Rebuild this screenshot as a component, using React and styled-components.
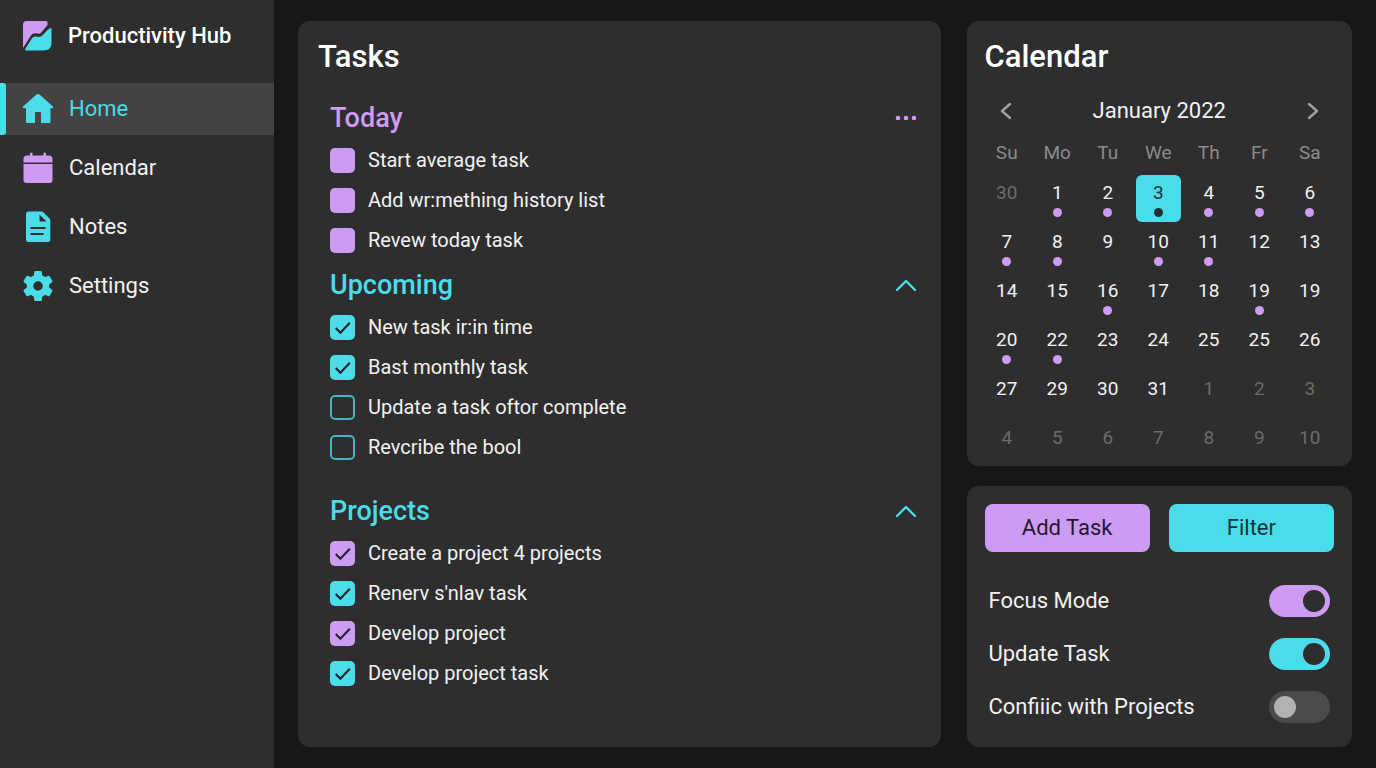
import React, { useState } from "react";
import styled, { createGlobalStyle } from "styled-components";

const color = {
  page: "#171717",
  panel: "#2e2e2e",
  active: "#434343",
  cyan: "#4adce9",
  purple: "#ce9bf2",
  text: "#f2f2f2",
  muted: "#8b8b8b",
  faint: "#6b6b6b",
};

const GlobalStyle = createGlobalStyle`
  * { box-sizing: border-box; }
  body {
    margin: 0;
    background: ${color.page};
    color: ${color.text};
    font-family: Roboto, "Liberation Sans", sans-serif;
  }
  button { font: inherit; color: inherit; border: 0; padding: 0; background: none; cursor: pointer; }
  h1, h2, h3, p, ul { margin: 0; padding: 0; }
  ul { list-style: none; }
`;

const Page = styled.div`
  display: grid;
  grid-template-columns: 274px minmax(0, 1fr);
  min-height: 100vh;
`;

const Sidebar = styled.aside`
  background: ${color.panel};
`;

const Brand = styled.div`
  display: flex;
  align-items: center;
  gap: 16px;
  height: 71px;
  padding-left: 22px;
  margin-bottom: 12px;
`;

const BrandName = styled.h1`
  font-size: 22px;
  font-weight: 500;
  line-height: 28px;
  color: #fff;
`;

const Nav = styled.nav`
  display: flex;
  flex-direction: column;
  gap: 7px;
`;

const NavLink = styled.a`
  display: flex;
  align-items: center;
  gap: 15px;
  height: 52px;
  padding-left: ${(p) => (p.$active ? 0 : 22)}px;
  font-size: 22px;
  line-height: 28px;
  text-decoration: none;
  color: ${(p) => (p.$active ? color.cyan : color.text)};
  background: ${(p) => (p.$active ? color.active : "transparent")};

  &::before {
    content: "";
    display: ${(p) => (p.$active ? "block" : "none")};
    width: 6px;
    height: 52px;
    margin-right: 1px;
    border-radius: 0 3px 3px 0;
    background: ${color.cyan};
  }
`;

const Main = styled.main`
  display: grid;
  grid-template-columns: minmax(0, 5fr) minmax(0, 3fr);
  gap: 26px;
  padding: 21px 24px;
`;

const SideColumn = styled.div`
  display: flex;
  flex-direction: column;
  gap: 20px;
`;

const Card = styled.section`
  background: ${color.panel};
  border-radius: 12px;
`;

const TasksCard = styled(Card)`
  padding: 16px 20px;
`;

const CalendarCard = styled(Card)`
  padding: 16px 17px 10px 15px;
`;

const ControlsCard = styled(Card)`
  flex: 1;
  padding: 18px 18px 13px;
`;

const CardTitle = styled.h2`
  font-size: 31px;
  font-weight: 500;
  line-height: 40px;
  color: #fff;
`;

const CalendarTitle = styled(CardTitle)`
  padding-left: 3px;
`;

const TaskSections = styled.div`
  margin-top: 19px;
  padding-left: 12px;
`;

const TaskSection = styled.section`
  padding-bottom: ${(p) => (p.$spaced ? 22 : 3)}px;
`;

const SectionHead = styled.div`
  display: flex;
  align-items: center;
  justify-content: space-between;
  height: 44px;
`;

const SectionTitle = styled.h3`
  font-size: 27px;
  font-weight: 500;
  line-height: 32px;
  color: ${(p) => color[p.$tone]};
`;

const HeadButton = styled.button`
  display: flex;
  align-items: center;
  justify-content: center;
  width: 30px;
  height: 30px;
  color: ${(p) => color[p.$tone]};
`;

const TaskRow = styled.label`
  display: flex;
  align-items: center;
  gap: 13px;
  height: 40px;
  font-size: 20px;
  line-height: 24px;
  cursor: pointer;
`;

const CHECK =
  "url(\"data:image/svg+xml,%3Csvg xmlns='http://www.w3.org/2000/svg' viewBox='0 0 24 24' fill='none' stroke='%23252030' stroke-width='2'%3E%3Cpath d='M5.500 12.500l4.500 4.500 9-9.500'/%3E%3C/svg%3E\")";

const TaskBox = styled.input`
  appearance: none;
  flex: none;
  width: 25px;
  height: 25px;
  margin: 0;
  border-radius: 5px;
  border: ${(p) => (p.$filled || p.checked ? "0" : "2px solid #43b6c0")};
  background: ${(p) => (p.$filled || p.checked ? color[p.$tone] : "transparent")};
  ${(p) => p.checked && `background-image: ${CHECK};`}
  cursor: pointer;
`;

const MonthBar = styled.div`
  display: flex;
  align-items: center;
  justify-content: space-between;
  height: 36px;
  margin-top: 16px;
  padding: 0 6px 0 8px;
`;

const MonthName = styled.p`
  font-size: 22px;
  line-height: 28px;
`;

const MonthButton = styled.button`
  display: flex;
  align-items: center;
  justify-content: center;
  width: 32px;
  height: 32px;
  color: #a0a0a0;
`;

const MonthTable = styled.table`
  width: 100%;
  margin-top: 9px;
  border-collapse: collapse;
  table-layout: fixed;
`;

const WeekdayCell = styled.th`
  height: 37px;
  padding: 0 0 7px;
  font-size: 19px;
  font-weight: 400;
  line-height: 24px;
  color: ${color.muted};
`;

const Week = styled.tr`
  height: 49px;
  &:last-child { height: 36px; }
`;

const DayCell = styled.td`
  padding: 0;
  vertical-align: top;
`;

const Day = styled.button`
  display: flex;
  flex-direction: column;
  align-items: center;
  gap: 3px;
  width: 45px;
  height: ${(p) => (p.$selected ? "47px" : "auto")};
  margin: 0 auto;
  padding-top: 6px;
  border-radius: 6px;
  font-size: 19px;
  line-height: 24px;
  color: ${(p) => (p.$selected ? "#14343a" : p.$outside ? color.faint : color.text)};
  background: ${(p) => (p.$selected ? color.cyan : "transparent")};
`;

const Dot = styled.span`
  width: 9px;
  height: 9px;
  border-radius: 50%;
  background: ${(p) => (p.$selected ? "#1d3136" : color.purple)};
`;

const ButtonRow = styled.div`
  display: grid;
  grid-template-columns: 1fr 1fr;
  gap: 19px;
  margin-bottom: 22px;
`;

const ActionButton = styled.button`
  height: 48px;
  border-radius: 8px;
  font-size: 22px;
  line-height: 28px;
  color: ${(p) => (p.$tone === "purple" ? "#271832" : "#15353a")};
  background: ${(p) => color[p.$tone]};
`;

const SwitchRow = styled.label`
  display: flex;
  align-items: center;
  justify-content: space-between;
  height: 53px;
  padding: 0 4px;
  font-size: 22px;
  line-height: 28px;
  cursor: pointer;
`;

const Switch = styled.input`
  appearance: none;
  display: flex;
  align-items: center;
  justify-content: ${(p) => (p.checked ? "flex-end" : "flex-start")};
  width: 61px;
  height: 32px;
  margin: 0;
  padding: 0 5px;
  border-radius: 16px;
  background: ${(p) => (p.checked ? color[p.$tone] : "#4a4a4a")};
  cursor: pointer;

  &::before {
    content: "";
    width: 22px;
    height: 22px;
    border-radius: 50%;
    background: ${(p) => (p.checked ? color.panel : "#b2b2b2")};
  }
`;

const LogoIcon = () => (
  <svg width="30" height="30" viewBox="0 0 30 30" aria-hidden="true">
    <path d="M1 4Q1 0 4.500 0H24Q25.500 0 25.500 1.500V4L19 11.800Q17.500 13.500 14.500 12.300Q11 11.500 9 14.500L1 27Z" fill={color.purple} />
    <path d="M29.500 7V22Q29.500 29.500 21.500 29.500H4Q2.500 29.500 3.500 27.500L10 17.300Q11.500 15 14 15.500Q18 16.800 20.300 14.500L25.500 9Q27.500 7 29.500 7Z" fill={color.cyan} />
  </svg>
);

const HomeIcon = () => (
  <svg width="32" height="32" viewBox="0 0 32 32" fill={color.cyan} aria-hidden="true">
    <path d="M14.500 1.500Q16 0.300 17.500 1.500L31 13.500Q31.800 15.200 30 15.200H28.500V28.500Q28.500 30 27 30H19V20Q19 19 18 19H14Q13 19 13 20V30H5.500Q4 30 4 28.500V15.200H2Q0.200 15.200 1 13.500Z" />
  </svg>
);

const CalendarIcon = () => (
  <svg width="32" height="32" viewBox="0 0 32 32" fill={color.purple} aria-hidden="true">
    <path d="M8 1Q9.500 0 10.500 1V3.500H21.500V1Q23 0 24 1V3.500H27Q30.500 3.500 30.500 7V10.500H1.500V7Q1.500 3.500 5 3.500H8Z" />
    <path d="M1.500 12H30.500V28Q30.500 31 27.500 31H4.500Q1.500 31 1.500 28Z" />
  </svg>
);

const NotesIcon = () => (
  <svg width="32" height="32" viewBox="0 0 32 32" aria-hidden="true">
    <path d="M6.500 0.500H19.500Q20.500 0.500 21.300 1.300L27.500 7.500Q28.300 8.300 28.300 9.500V28.500Q28.300 31 25.800 31H6.500Q4 31 4 28.500V3Q4 0.500 6.500 0.500Z" fill={color.cyan} />
    <path d="M17.500 3.500L24.500 10.500H19Q17.500 10.500 17.500 9Z" fill={color.panel} />
    <path d="M9.300 17H22.700M9.300 23H20.800" stroke={color.panel} strokeWidth="2.200" strokeLinecap="round" />
  </svg>
);

const SettingsIcon = () => (
  <svg width="32" height="32" viewBox="0 0 32 32" fill={color.cyan} stroke={color.cyan} strokeLinejoin="round" aria-hidden="true">
    {[0, 60, 120, 180, 240, 300].map((angle) => (
      <path key={angle} d="M13.300 2H18.700L19.500 8H12.500Z" strokeWidth="2" transform={`rotate(${angle} 16 16)`} />
    ))}
    <circle cx="16" cy="16" r="8" fill="none" strokeWidth="6.500" />
  </svg>
);

const Chevron = ({ d, w, h }) => (
  <svg width={w} height={h} viewBox={`0 0 ${w} ${h}`} fill="none" stroke="currentColor" strokeWidth="2.400" strokeLinecap="round" strokeLinejoin="round" aria-hidden="true">
    <path d={d} />
  </svg>
);

const MoreIcon = () => (
  <svg width="22" height="6" viewBox="0 0 22 6" fill="currentColor" aria-hidden="true">
    <circle cx="3" cy="3" r="2.300" />
    <circle cx="11" cy="3" r="2.300" />
    <circle cx="19" cy="3" r="2.300" />
  </svg>
);

const navItems = [
  { label: "Home", Icon: HomeIcon },
  { label: "Calendar", Icon: CalendarIcon },
  { label: "Notes", Icon: NotesIcon },
  { label: "Settings", Icon: SettingsIcon },
];

const taskSections = [
  {
    title: "Today",
    tone: "purple",
    tasks: [
      { text: "Start average task", tone: "purple", filled: true },
      { text: "Add wr:mething history list", tone: "purple", filled: true },
      { text: "Revew today task", tone: "purple", filled: true },
    ],
  },
  {
    title: "Upcoming",
    tone: "cyan",
    spaced: true,
    tasks: [
      { text: "New task ir:in time", tone: "cyan", done: true },
      { text: "Bast monthly task", tone: "cyan", done: true },
      { text: "Update a task oftor complete", tone: "cyan" },
      { text: "Revcribe the bool", tone: "cyan" },
    ],
  },
  {
    title: "Projects",
    tone: "cyan",
    tasks: [
      { text: "Create a project 4 projects", tone: "purple", done: true },
      { text: "Renerv s'nlav task", tone: "cyan", done: true },
      { text: "Develop project", tone: "purple", done: true },
      { text: "Develop project task", tone: "cyan", done: true },
    ],
  },
];

const weekdays = ["Su", "Mo", "Tu", "We", "Th", "Fr", "Sa"];

// A trailing "*" marks a day with an event, a leading "-" a day of another month.
const weeks = [
  "-30 1* 2* 3* 4* 5* 6*",
  "7* 8* 9 10* 11* 12 13",
  "14 15 16* 17 18 19* 19",
  "20* 22* 23 24 25 25 26",
  "27 29 30 31 -1 -2 -3",
  "-4 -5 -6 -7 -8 -9 -10",
].map((week) =>
  week.split(" ").map((day) => ({
    label: day.replace(/[-*]/g, ""),
    event: day.endsWith("*"),
    outside: day.startsWith("-"),
  }))
);

const switches = [
  { label: "Focus Mode", tone: "purple", on: true },
  { label: "Update Task", tone: "cyan", on: true },
  { label: "Confiiic with Projects", tone: "cyan", on: false },
];

function Task({ task }) {
  const [done, setDone] = useState(Boolean(task.done));
  return (
    <li>
      <TaskRow>
        <TaskBox
          type="checkbox"
          $tone={task.tone}
          $filled={task.filled}
          checked={done}
          onChange={(e) => setDone(e.target.checked)}
        />
        {task.text}
      </TaskRow>
    </li>
  );
}

function Toggle({ item }) {
  const [on, setOn] = useState(item.on);
  return (
    <SwitchRow>
      {item.label}
      <Switch type="checkbox" role="switch" $tone={item.tone} checked={on} onChange={(e) => setOn(e.target.checked)} />
    </SwitchRow>
  );
}

export default function App() {
  const [selected, setSelected] = useState("0-3");
  return (
    <>
      <GlobalStyle />
      <Page>
        <Sidebar>
          <Brand>
            <LogoIcon />
            <BrandName>Productivity Hub</BrandName>
          </Brand>
          <Nav>
            {navItems.map(({ label, Icon }, i) => (
              <NavLink key={label} href={`#${label.toLowerCase()}`} $active={i === 0}>
                <Icon />
                {label}
              </NavLink>
            ))}
          </Nav>
        </Sidebar>
        <Main>
          <TasksCard>
            <CardTitle>Tasks</CardTitle>
            <TaskSections>
              {taskSections.map((section) => (
                <TaskSection key={section.title} $spaced={section.spaced}>
                  <SectionHead>
                    <SectionTitle $tone={section.tone}>{section.title}</SectionTitle>
                    <HeadButton
                      type="button"
                      $tone={section.tone}
                      aria-label={section.title === "Today" ? "More options" : `Collapse ${section.title}`}
                    >
                      {section.title === "Today" ? <MoreIcon /> : <Chevron w={22} h={14} d="M2 12L11 3L20 12" />}
                    </HeadButton>
                  </SectionHead>
                  <ul>
                    {section.tasks.map((task) => (
                      <Task key={task.text} task={task} />
                    ))}
                  </ul>
                </TaskSection>
              ))}
            </TaskSections>
          </TasksCard>
          <SideColumn>
            <CalendarCard>
              <CalendarTitle>Calendar</CalendarTitle>
              <MonthBar>
                <MonthButton type="button" aria-label="Previous month">
                  <Chevron w={12} h={18} d="M10 2L2 9L10 16" />
                </MonthButton>
                <MonthName>January 2022</MonthName>
                <MonthButton type="button" aria-label="Next month">
                  <Chevron w={12} h={18} d="M2 2L10 9L2 16" />
                </MonthButton>
              </MonthBar>
              <MonthTable>
                <thead>
                  <tr>
                    {weekdays.map((day) => (
                      <WeekdayCell key={day} scope="col">{day}</WeekdayCell>
                    ))}
                  </tr>
                </thead>
                <tbody>
                  {weeks.map((week, w) => (
                    <Week key={w}>
                      {week.map((day, d) => {
                        const id = `${w}-${d}`;
                        const isSelected = id === selected;
                        return (
                          <DayCell key={id}>
                            <Day
                              type="button"
                              aria-pressed={isSelected}
                              $selected={isSelected}
                              $outside={day.outside}
                              onClick={() => setSelected(id)}
                            >
                              {day.label}
                              {day.event && <Dot $selected={isSelected} />}
                            </Day>
                          </DayCell>
                        );
                      })}
                    </Week>
                  ))}
                </tbody>
              </MonthTable>
            </CalendarCard>
            <ControlsCard>
              <ButtonRow>
                <ActionButton type="button" $tone="purple">Add Task</ActionButton>
                <ActionButton type="button" $tone="cyan">Filter</ActionButton>
              </ButtonRow>
              {switches.map((item) => (
                <Toggle key={item.label} item={item} />
              ))}
            </ControlsCard>
          </SideColumn>
        </Main>
      </Page>
    </>
  );
}
